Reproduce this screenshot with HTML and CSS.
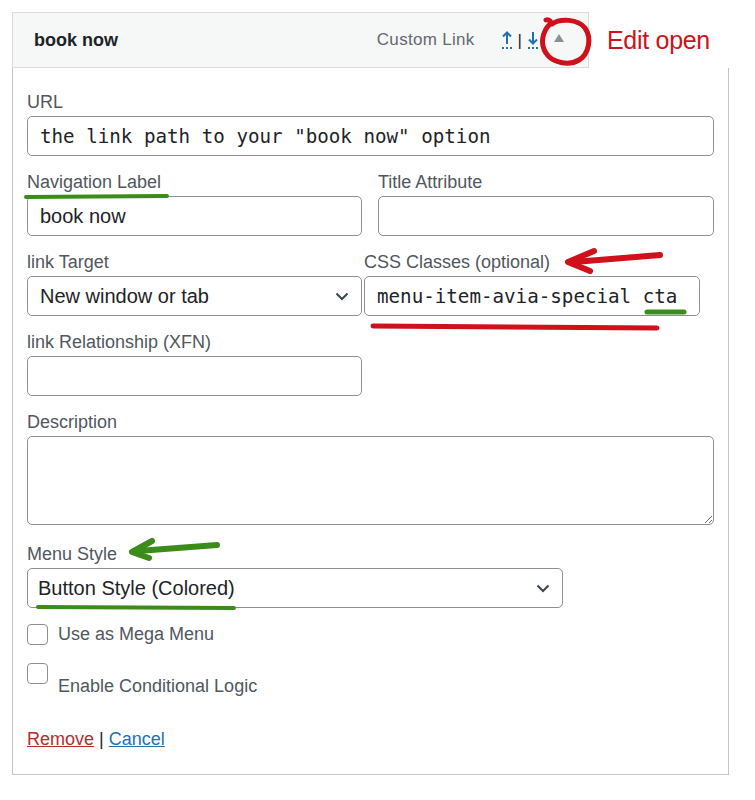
FILE: index.html
```html
<!DOCTYPE html>
<html lang="en">
<head>
<meta charset="utf-8">
<title>Menu item – book now</title>
<link rel="stylesheet" href="styles.css">
</head>
<body>
<div class="page">
  <div class="head-row">
    <div class="item-bar">
      <span class="item-title">book now</span>
      <span class="item-type">Custom Link</span>
      <span class="item-moves">
        <a class="move" href="#"><svg width="10" height="14" viewBox="0 0 10 14"><path d="M5 13V2M1 5.5L5 1.5L9 5.5" fill="none" stroke="#2271b1" stroke-width="2"/></svg></a>
        <span class="pipe">|</span>
        <a class="move" href="#"><svg width="10" height="14" viewBox="0 0 10 14"><path d="M5 1V12M1 8.5L5 12.5L9 8.5" fill="none" stroke="#2271b1" stroke-width="2"/></svg></a>
      </span>
      <span class="item-toggle"><svg width="10" height="8" viewBox="0 0 10 8"><path d="M0 8L5 0L10 8Z" fill="#8c8f94"/></svg></span>
    </div>
    <span class="note">Edit open</span>
  </div>

  <div class="settings">
    <div class="field">
      <label class="lbl">URL</label>
      <input class="inp mono" type="text" value="the link path to your &quot;book now&quot; option">
    </div>

    <div class="row row-a">
      <div class="field col">
        <label class="lbl">Navigation Label</label>
        <input class="inp" type="text" value="book now">
      </div>
      <div class="field col">
        <label class="lbl">Title Attribute</label>
        <input class="inp" type="text" value="">
      </div>
    </div>

    <div class="row row-b">
      <div class="field col">
        <label class="lbl">link Target</label>
        <div class="sel">
          <span>New window or tab</span>
          <svg class="chev" width="14" height="9" viewBox="0 0 14 9"><path d="M1.5 1.5L7 7L12.5 1.5" fill="none" stroke="#3c434a" stroke-width="2"/></svg>
        </div>
      </div>
      <div class="field col">
        <label class="lbl">CSS Classes (optional)</label>
        <input class="inp mono" type="text" value="menu-item-avia-special cta">
      </div>
    </div>

    <div class="field col">
      <label class="lbl">link Relationship (XFN)</label>
      <input class="inp" type="text" value="">
    </div>

    <div class="field">
      <label class="lbl">Description</label>
      <textarea class="area"></textarea>
    </div>

    <div class="field style-field">
      <label class="lbl">Menu Style</label>
      <div class="sel sel-wide">
        <span>Button Style (Colored)</span>
        <svg class="chev" width="14" height="9" viewBox="0 0 14 9"><path d="M1.5 1.5L7 7L12.5 1.5" fill="none" stroke="#3c434a" stroke-width="2"/></svg>
      </div>
    </div>

    <label class="check">
      <input class="box" type="checkbox">
      <span>Use as Mega Menu</span>
    </label>
    <label class="check check-low">
      <input class="box" type="checkbox">
      <span>Enable Conditional Logic</span>
    </label>

    <div class="actions">
      <a class="remove" href="#">Remove</a> <span class="sep">|</span> <a class="cancel" href="#">Cancel</a>
    </div>
  </div>

  <svg class="marks" width="755" height="800" viewBox="0 0 755 800">
    <path d="M552 24 C560 18 578 19 585 28 C592 38 589 54 579 60 C569 66 552 63 546 53 C540 44 542 32 550 24 C552 22 549 19 546 20" fill="none" stroke="#d0101b" stroke-width="5" stroke-linecap="round"/>
    <path d="M26 197 L167 196" stroke="#3c8c1c" stroke-width="4" stroke-linecap="round"/>
    <path d="M660 255 L574 262" stroke="#d0101b" stroke-width="6" stroke-linecap="round"/>
    <path d="M594 251 L568 262 L590 271" fill="none" stroke="#d0101b" stroke-width="6" stroke-linecap="round" stroke-linejoin="round"/>
    <path d="M647 312 L684 312" stroke="#3c8c1c" stroke-width="5" stroke-linecap="round"/>
    <path d="M373 326 L657 328" stroke="#d0101b" stroke-width="5" stroke-linecap="round"/>
    <path d="M217 545 L138 551" stroke="#3c8c1c" stroke-width="6" stroke-linecap="round"/>
    <path d="M152 541 L132 552 L149 558" fill="none" stroke="#3c8c1c" stroke-width="6" stroke-linecap="round" stroke-linejoin="round"/>
    <path d="M38 607 L234 608" stroke="#3c8c1c" stroke-width="4" stroke-linecap="round"/>
  </svg>
</div>
</body>
</html>
```

FILE: styles.css
```css
* { box-sizing: border-box; }

html, body {
  margin: 0;
  padding: 0;
  background: #ffffff;
}

body {
  font-family: "Liberation Sans", Arial, sans-serif;
  color: #1d2327;
}

.page {
  position: relative;
  width: 755px;
  height: 800px;
  padding: 12px 0 0 12px;
}

.head-row {
  display: flex;
  align-items: center;
}

.item-bar {
  width: 577px;
  height: 56px;
  display: flex;
  align-items: center;
  padding: 0 24px 0 21px;
  background: #f6f7f7;
  border: 1px solid #dcdcde;
}

.item-title {
  flex: 1;
  font-size: 18px;
  font-weight: 700;
  color: #1d2327;
}

.item-type {
  font-size: 17px;
  color: #646970;
  margin-right: 27px;
  letter-spacing: 0.3px;
}

.item-moves {
  display: flex;
  align-items: center;
  gap: 6px;
}

.move {
  display: flex;
  padding-bottom: 2px;
  border-bottom: 2px dotted #2271b1;
}

.pipe {
  font-size: 17px;
  color: #1d2327;
  line-height: 1;
}

.item-toggle {
  display: flex;
  margin-left: 16px;
  margin-top: -4px;
}

.note {
  margin-left: 18px;
  font-size: 25px;
  color: #d0101b;
  letter-spacing: -0.3px;
}

.settings {
  width: 717px;
  height: 707px;
  padding: 23px 14px 0 14px;
  border: 1px solid #c3c4c7;
  border-top: none;
}

.field {
  margin-bottom: 15px;
}

.lbl {
  display: block;
  font-size: 18px;
  line-height: 22px;
  margin-bottom: 3px;
  color: #50575e;
}

.inp {
  display: block;
  width: 100%;
  height: 40px;
  padding: 0 12px;
  border: 1px solid #8c8f94;
  border-radius: 5px;
  font-family: "Liberation Sans", Arial, sans-serif;
  font-size: 20px;
  color: #1d2327;
  background: #ffffff;
  outline: none;
}

.mono {
  font-family: "DejaVu Sans Mono", "Liberation Mono", monospace;
  font-size: 19.2px;
}

.row {
  display: flex;
}

.row-a { gap: 16px; }
.row-b { gap: 2px; }

.col {
  width: 335px;
}

.row .col + .col {
  width: 336px;
}

.sel {
  height: 40px;
  display: flex;
  align-items: center;
  justify-content: space-between;
  padding: 0 12px;
  border: 1px solid #8c8f94;
  border-radius: 5px;
  font-size: 20px;
  color: #1d2327;
  background: #ffffff;
}

.sel-wide {
  width: 536px;
  padding-left: 10px;
}

.area {
  display: block;
  width: 100%;
  height: 89px;
  border: 1px solid #8c8f94;
  border-radius: 5px;
  resize: both;
  font-family: "Liberation Sans", Arial, sans-serif;
  font-size: 18px;
  outline: none;
}

.style-field {
  margin-top: 18px;
}

.check {
  display: flex;
  align-items: center;
  gap: 10px;
  font-size: 18px;
  line-height: 22px;
  color: #50575e;
}

.check-low {
  align-items: flex-start;
  margin-top: 18px;
}

.check-low span {
  padding-top: 12px;
}

.box {
  appearance: none;
  -webkit-appearance: none;
  width: 21px;
  height: 21px;
  margin: 0;
  border: 1px solid #8c8f94;
  border-radius: 4px;
  background: #ffffff;
  flex: none;
}

.actions {
  margin-top: 31px;
  font-size: 18px;
  line-height: 22px;
  color: #1d2327;
}

.remove {
  color: #b32d2e;
  text-decoration: underline;
}

.cancel {
  color: #2271b1;
  text-decoration: underline;
}

.sep {
  color: #1d2327;
}

.marks {
  position: absolute;
  top: 0;
  left: 0;
  pointer-events: none;
}
```
